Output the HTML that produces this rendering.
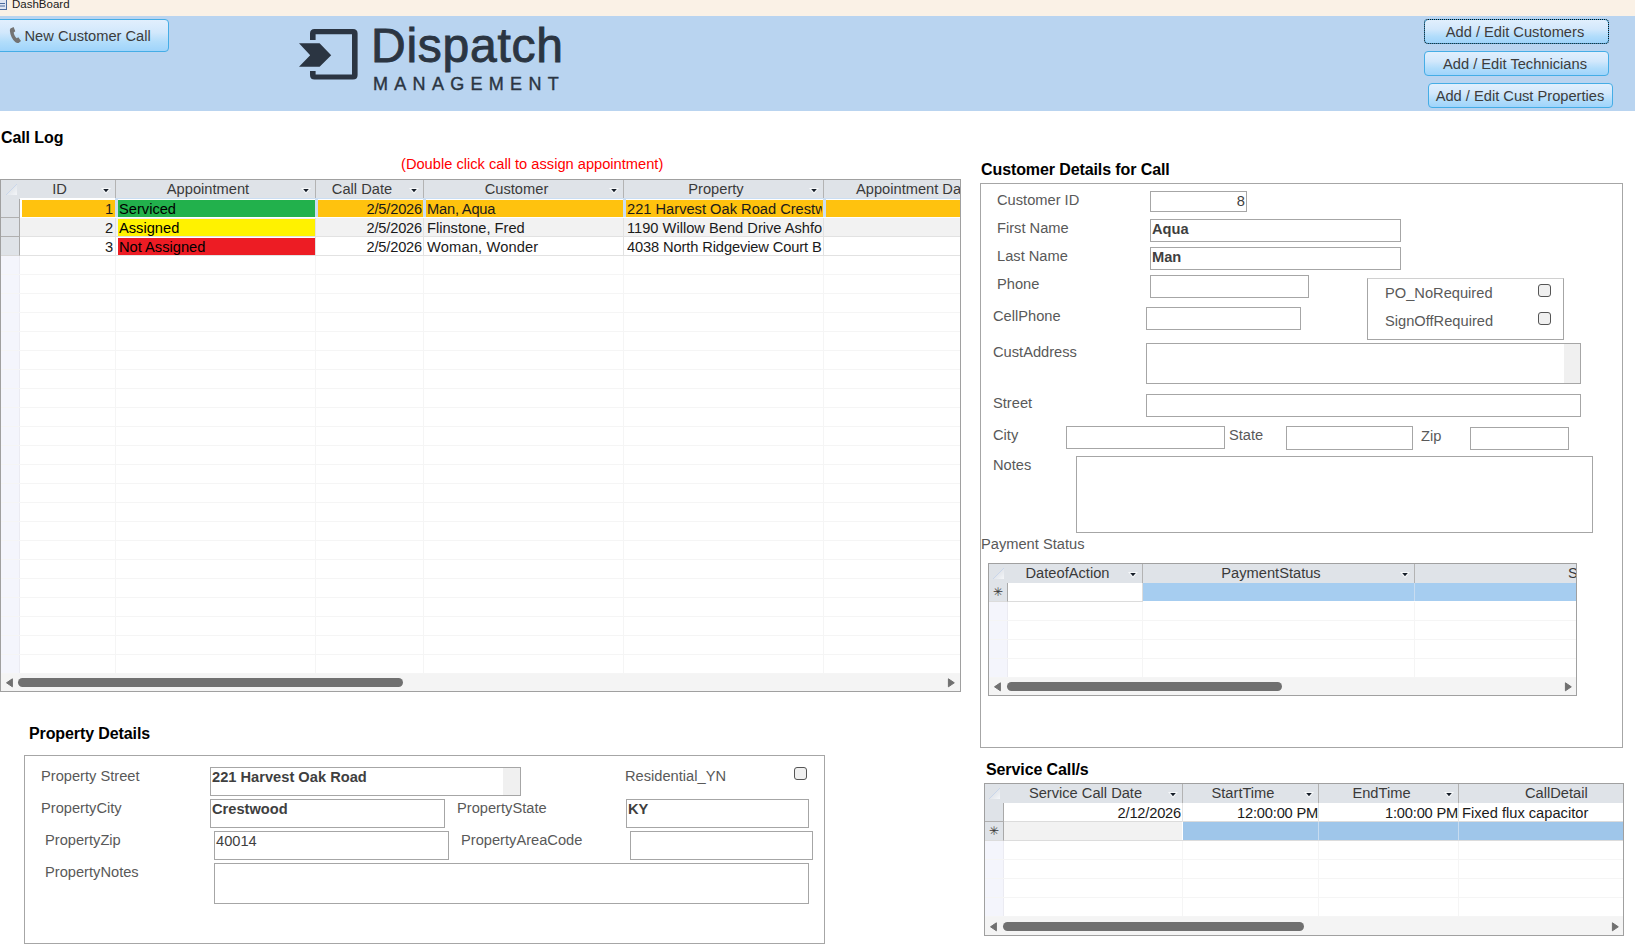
<!DOCTYPE html>
<html><head><meta charset="utf-8"><title>DashBoard</title>
<style>
*{box-sizing:border-box;margin:0;padding:0}
html,body{width:1635px;height:945px;overflow:hidden;background:#fff}
body{position:relative;font-family:"Liberation Sans",sans-serif;font-size:14.67px;color:#595959}
div,svg{position:absolute}
#title{left:0;top:0;width:1635px;height:16px;background:#faf1e6}
#title span{position:absolute;left:12px;top:-2px;font-size:11.5px;color:#1a1a1a;white-space:nowrap;letter-spacing:0}
#band{left:0;top:16px;width:1635px;height:95px;background:#b9d4f0}
.btn{border:1px solid #45ade6;border-radius:4px;background:linear-gradient(#e1effd 0%,#d2e8fc 40%,#b2ddfb 70%,#9fd4fb 100%);color:#3c3c3c;text-align:center;white-space:nowrap}
#fb::after{content:"";position:absolute;left:-1px;top:-1px;right:-1px;bottom:-1px;border:1px dotted #111;border-radius:4px}
.lbl{white-space:nowrap;color:#595959;line-height:17px;height:17px}
.h{white-space:nowrap;color:#000;font-weight:bold;font-size:16px;line-height:18px;letter-spacing:-0.1px}
.inp{border:1px solid #a6a6a6;background:#fff;color:#3f3f3f;font-weight:bold;white-space:nowrap;overflow:hidden;padding:1px 1px;line-height:17px}
.box{border:1px solid #a6a6a6}
.cb{width:13px;height:13px;border:1px solid #555;border-radius:3px;background:#f0f0f0}
.grid{border:1px solid #a0a0a0;background:#fff;overflow:hidden}
.gh{background:#dfe3e8;color:#3a3a3a;text-align:center;line-height:18px;height:19px;top:0;white-space:nowrap;overflow:hidden}
.cell{white-space:nowrap;overflow:hidden;line-height:18px;height:18px;color:#1a1a1a}
.arr{width:10px;height:6px}
.sb{background:#f4f4f4}
.thumb{background:#707070;border-radius:5px;height:9px}
.tl{width:0;height:0;border-top:4.5px solid transparent;border-bottom:4.5px solid transparent;border-right:7px solid #707070}
.tr{width:0;height:0;border-top:4.5px solid transparent;border-bottom:4.5px solid transparent;border-left:7px solid #707070}
.vl{width:1px}
.hl{height:1px}
</style></head><body>
<div id="title"><span>DashBoard</span></div>
<div id="band"></div>
<svg style="left:0;top:0;width:12px;height:16px" viewBox="0 0 12 16"><rect x="-3" y="-1" width="9.5" height="10.5" fill="#dfe6f3" stroke="#4a6a9c" stroke-width="1"/><path d="M0 3.5h5M0 6h5" stroke="#4a6a9c" stroke-width="1"/></svg>
<div class="btn" style="left:-4px;top:19px;width:173px;height:33px;line-height:33.5px;text-align:left;padding-left:27.5px">New Customer Call</div>
<svg style="left:9px;top:26px;width:13px;height:18px" viewBox="0 0 13 18"><path d="M1.4 2.4 L4.6 0.9 L6.3 5.3 L4.7 6.5 C4.9 8.6 6 10.7 7.7 12.2 L9.3 11.3 L12 15 L9.6 16.9 C8.6 17.3 7.5 17.1 6.5 16.3 C3.3 13.7 1.3 9.7 0.9 5.1 C0.8 4 0.9 3.1 1.4 2.4 Z" fill="#737373"/></svg>
<svg style="left:296px;top:26px;width:66px;height:58px" viewBox="296 26 66 58">
<path d="M310 40 V33.5 Q310 29 314.5 29 H353 Q357.6 29 357.6 33.5 V75 Q357.6 79.6 353 79.6 H314.5 Q310 79.6 310 75 V71.1 H315.6 V74.4 H352 V34.2 H315.6 V40 Z" fill="#2b3542"/>
<path d="M299 43.2 H319.6 L331.2 55.2 L319.6 66.8 H299 L310.2 55.2 Z" fill="#2b3542"/></svg>
<div id="logo1" style="left:371px;top:19px;font-size:48px;line-height:54px;color:#2b3542;letter-spacing:0.75px;-webkit-text-stroke:0.9px #2b3542;white-space:nowrap">Dispatch</div>
<div id="logo2" style="left:373px;top:74.3px;font-size:18px;line-height:20px;color:#2b3542;letter-spacing:6.3px;-webkit-text-stroke:0.4px #2b3542;white-space:nowrap">MANAGEMENT</div>
<div class="btn" id="fb" style="left:1424px;top:19px;width:185px;height:25px;line-height:25px;padding-right:3px">Add / Edit Customers</div>
<div class="btn" style="left:1424px;top:51px;width:185px;height:25px;line-height:25px;padding-right:3px">Add / Edit Technicians</div>
<div class="btn" style="left:1428px;top:83px;width:185px;height:25px;line-height:25px;padding-right:1px">Add / Edit Cust Properties</div>
<div class="h" style="left:1px;top:129px">Call Log</div>
<div class="lbl" style="left:401px;top:156px;color:#ff0000">(Double click call to assign appointment)</div>
<div class="grid" style="left:0;top:179px;width:961px;height:513px">
<div class="gh" style="left:0;width:961px"></div>
<svg style="left:4px;top:3px;width:13px;height:13px" viewBox="0 0 13 13"><defs><linearGradient id="tg1" x1="0" y1="0" x2="1" y2="1"><stop offset="0.4" stop-color="#dfe3e8"/><stop offset="1" stop-color="#f4f6f9"/></linearGradient></defs><path d="M12 1V12H1Z" fill="url(#tg1)"/><path d="M1 12L12 1" stroke="#c9d6ea" stroke-width="1"/></svg>
<div class="gh" style="left:19px;width:95px;padding-right:16px">ID</div>
<svg class="arr" style="left:100px;top:8px" viewBox="0 0 10 6"><path d="M0 0H10L5 6Z" fill="#f6f8fa"/><path d="M2.2 1H7.8L5 4.2Z" fill="#161e29"/></svg>
<div class="gh" style="left:114px;width:200px;padding-right:14px">Appointment</div>
<svg class="arr" style="left:300px;top:8px" viewBox="0 0 10 6"><path d="M0 0H10L5 6Z" fill="#f6f8fa"/><path d="M2.2 1H7.8L5 4.2Z" fill="#161e29"/></svg>
<div class="gh" style="left:314px;width:108px;padding-right:14px">Call Date</div>
<svg class="arr" style="left:408px;top:8px" viewBox="0 0 10 6"><path d="M0 0H10L5 6Z" fill="#f6f8fa"/><path d="M2.2 1H7.8L5 4.2Z" fill="#161e29"/></svg>
<div class="gh" style="left:422px;width:200px;padding-right:13px">Customer</div>
<svg class="arr" style="left:608px;top:8px" viewBox="0 0 10 6"><path d="M0 0H10L5 6Z" fill="#f6f8fa"/><path d="M2.2 1H7.8L5 4.2Z" fill="#161e29"/></svg>
<div class="gh" style="left:622px;width:200px;padding-right:14px">Property</div>
<svg class="arr" style="left:808px;top:8px" viewBox="0 0 10 6"><path d="M0 0H10L5 6Z" fill="#f6f8fa"/><path d="M2.2 1H7.8L5 4.2Z" fill="#161e29"/></svg>
<div class="gh" style="left:823px;width:138px;text-align:left;padding-left:32px">Appointment Da</div>
<div class="vl" style="left:114px;top:0px;height:19px;background:#b3b3b3"></div>
<div class="vl" style="left:314px;top:0px;height:19px;background:#b3b3b3"></div>
<div class="vl" style="left:422px;top:0px;height:19px;background:#b3b3b3"></div>
<div class="vl" style="left:622px;top:0px;height:19px;background:#b3b3b3"></div>
<div class="vl" style="left:822px;top:0px;height:19px;background:#b3b3b3"></div>
<div style="left:0;top:19px;width:19px;height:475px;background:#f4f5fc;border-right:1px solid #ebebf2"></div>
<div style="left:0;top:19px;width:19px;height:19px;background:#dfe3e8;border-right:1px solid #a9a9a9;border-bottom:1px solid #b0b0b0"></div>
<div style="left:19px;top:18px;width:941px;height:20px;background:#fff"></div>
<div style="left:114px;top:18px;width:3px;height:19px;background:#cbdef3"></div>
<div style="left:314px;top:18px;width:3px;height:19px;background:#cbdef3"></div>
<div style="left:422px;top:18px;width:3px;height:19px;background:#cbdef3"></div>
<div style="left:622px;top:18px;width:3px;height:19px;background:#cbdef3"></div>
<div style="left:822px;top:18px;width:3px;height:19px;background:#cbdef3"></div>
<div style="left:114px;top:18px;width:846px;height:1px;background:#cbdef3"></div>
<div style="left:21px;top:20px;width:93px;height:17px;background:#ffc20e"></div>
<div style="left:317px;top:20px;width:105px;height:17px;background:#ffc20e"></div>
<div style="left:425px;top:20px;width:197px;height:17px;background:#ffc20e"></div>
<div style="left:625px;top:20px;width:197px;height:17px;background:#ffc20e"></div>
<div style="left:825px;top:20px;width:135px;height:17px;background:#ffc20e"></div>
<div class="cell" style="left:21px;top:20px;width:91px;text-align:right;letter-spacing:-0.2px">1</div>
<div class="cell" style="left:117px;top:20px;width:197px;height:17px;background:#22b14c;padding-left:1px;line-height:19px;color:#000">Serviced</div>
<div class="cell" style="left:317px;top:20px;width:104px;text-align:right;letter-spacing:-0.2px">2/5/2026</div>
<div class="cell" style="left:426px;top:20px;width:195px;letter-spacing:-0.2px">Man, Aqua</div>
<div class="cell" style="left:626px;top:20px;width:195px;letter-spacing:0px">221 Harvest Oak Road Crestwood</div>
<div style="left:0;top:38px;width:19px;height:19px;background:#dfe3e8;border-right:1px solid #a9a9a9;border-bottom:1px solid #b0b0b0"></div>
<div style="left:19px;top:38px;width:941px;height:19px;background:#f2f2f2;border-bottom:1px solid #e2e2e2"></div>
<div class="vl" style="left:114px;top:38px;height:19px;background:#e2e2e2"></div>
<div class="vl" style="left:314px;top:38px;height:19px;background:#e2e2e2"></div>
<div class="vl" style="left:422px;top:38px;height:19px;background:#e2e2e2"></div>
<div class="vl" style="left:622px;top:38px;height:19px;background:#e2e2e2"></div>
<div class="vl" style="left:822px;top:38px;height:19px;background:#e2e2e2"></div>
<div class="cell" style="left:21px;top:39px;width:91px;text-align:right;letter-spacing:-0.2px">2</div>
<div class="cell" style="left:117px;top:39px;width:197px;height:17px;background:#fff200;padding-left:1px;line-height:19px;color:#000">Assigned</div>
<div class="cell" style="left:317px;top:39px;width:104px;text-align:right;letter-spacing:-0.2px">2/5/2026</div>
<div class="cell" style="left:426px;top:39px;width:195px;letter-spacing:0px">Flinstone, Fred</div>
<div class="cell" style="left:626px;top:39px;width:195px;letter-spacing:0px">1190 Willow Bend Drive Ashford</div>
<div style="left:0;top:57px;width:19px;height:19px;background:#dfe3e8;border-right:1px solid #a9a9a9;border-bottom:1px solid #d8d8d8"></div>
<div style="left:19px;top:57px;width:941px;height:19px;background:#ffffff;border-bottom:1px solid #e2e2e2"></div>
<div class="vl" style="left:114px;top:57px;height:19px;background:#e2e2e2"></div>
<div class="vl" style="left:314px;top:57px;height:19px;background:#e2e2e2"></div>
<div class="vl" style="left:422px;top:57px;height:19px;background:#e2e2e2"></div>
<div class="vl" style="left:622px;top:57px;height:19px;background:#e2e2e2"></div>
<div class="vl" style="left:822px;top:57px;height:19px;background:#e2e2e2"></div>
<div class="cell" style="left:21px;top:58px;width:91px;text-align:right;letter-spacing:-0.2px">3</div>
<div class="cell" style="left:117px;top:58px;width:197px;height:17px;background:#ed1c24;padding-left:1px;line-height:19px;color:#000">Not Assigned</div>
<div class="cell" style="left:317px;top:58px;width:104px;text-align:right;letter-spacing:-0.2px">2/5/2026</div>
<div class="cell" style="left:426px;top:58px;width:195px;letter-spacing:0.15px">Woman, Wonder</div>
<div class="cell" style="left:626px;top:58px;width:195px;letter-spacing:-0.12px">4038 North Ridgeview Court B</div>
<div class="hl" style="left:0px;top:94px;width:961px;background:#f5f5f5"></div>
<div class="hl" style="left:0px;top:113px;width:961px;background:#f5f5f5"></div>
<div class="hl" style="left:0px;top:132px;width:961px;background:#f5f5f5"></div>
<div class="hl" style="left:0px;top:151px;width:961px;background:#f5f5f5"></div>
<div class="hl" style="left:0px;top:170px;width:961px;background:#f5f5f5"></div>
<div class="hl" style="left:0px;top:189px;width:961px;background:#f5f5f5"></div>
<div class="hl" style="left:0px;top:208px;width:961px;background:#f5f5f5"></div>
<div class="hl" style="left:0px;top:227px;width:961px;background:#f5f5f5"></div>
<div class="hl" style="left:0px;top:246px;width:961px;background:#f5f5f5"></div>
<div class="hl" style="left:0px;top:265px;width:961px;background:#f5f5f5"></div>
<div class="hl" style="left:0px;top:284px;width:961px;background:#f5f5f5"></div>
<div class="hl" style="left:0px;top:303px;width:961px;background:#f5f5f5"></div>
<div class="hl" style="left:0px;top:322px;width:961px;background:#f5f5f5"></div>
<div class="hl" style="left:0px;top:341px;width:961px;background:#f5f5f5"></div>
<div class="hl" style="left:0px;top:360px;width:961px;background:#f5f5f5"></div>
<div class="hl" style="left:0px;top:379px;width:961px;background:#f5f5f5"></div>
<div class="hl" style="left:0px;top:398px;width:961px;background:#f5f5f5"></div>
<div class="hl" style="left:0px;top:417px;width:961px;background:#f5f5f5"></div>
<div class="hl" style="left:0px;top:436px;width:961px;background:#f5f5f5"></div>
<div class="hl" style="left:0px;top:455px;width:961px;background:#f5f5f5"></div>
<div class="hl" style="left:0px;top:474px;width:961px;background:#f5f5f5"></div>
<div class="hl" style="left:0px;top:493px;width:961px;background:#f5f5f5"></div>
<div class="vl" style="left:114px;top:76px;height:418px;background:#f5f5f5"></div>
<div class="vl" style="left:314px;top:76px;height:418px;background:#f5f5f5"></div>
<div class="vl" style="left:422px;top:76px;height:418px;background:#f5f5f5"></div>
<div class="vl" style="left:622px;top:76px;height:418px;background:#f5f5f5"></div>
<div class="vl" style="left:822px;top:76px;height:418px;background:#f5f5f5"></div>
<div class="sb" style="left:0;top:494px;width:961px;height:17px"></div>
<svg style="left:5px;top:498px;width:8px;height:10px" viewBox="0 0 8 10"><path d="M6.4 0.8V8.800L0.5 4.8Z" fill="#707070" stroke="#707070" stroke-width="1" stroke-linejoin="round"/></svg>
<div class="thumb" style="left:17px;top:498px;width:385px"></div>
<svg style="left:946px;top:498px;width:8px;height:10px" viewBox="0 0 8 10"><path d="M1.4 0.8V8.800L7.3 4.8Z" fill="#707070" stroke="#707070" stroke-width="1" stroke-linejoin="round"/></svg>
</div>
<div class="h" style="left:981px;top:161px">Customer Details for Call</div>
<div class="box" style="left:980px;top:183px;width:643px;height:565px"></div>
<div class="lbl" style="left:997px;top:191.5px">Customer ID</div>
<div class="inp" style="left:1150px;top:191px;width:97px;height:21px;text-align:right;font-weight:normal;padding-top:1px">8</div>
<div class="lbl" style="left:997px;top:219.5px">First Name</div>
<div class="inp" style="left:1150px;top:219px;width:251px;height:23px;">Aqua</div>
<div class="lbl" style="left:997px;top:247.5px">Last Name</div>
<div class="inp" style="left:1150px;top:247px;width:251px;height:23px;">Man</div>
<div class="lbl" style="left:997px;top:275.5px">Phone</div>
<div class="inp" style="left:1150px;top:275px;width:159px;height:23px;"></div>
<div class="lbl" style="left:993px;top:307.5px">CellPhone</div>
<div class="inp" style="left:1146px;top:307px;width:155px;height:23px;"></div>
<div class="box" style="left:1367px;top:278px;width:197px;height:62px;border-top-color:#d0d0d0"></div>
<div class="lbl" style="left:1385px;top:284.5px">PO_NoRequired</div>
<div class="cb" style="left:1538px;top:284px"></div>
<div class="lbl" style="left:1385px;top:312.5px">SignOffRequired</div>
<div class="cb" style="left:1538px;top:312px"></div>
<div class="lbl" style="left:993px;top:343.5px">CustAddress</div>
<div class="inp" style="left:1146px;top:343px;width:435px;height:41px;"></div>
<div style="left:1564px;top:344px;width:16px;height:39px;background:#f0f0f0"></div>
<div class="lbl" style="left:993px;top:394.5px">Street</div>
<div class="inp" style="left:1146px;top:394px;width:435px;height:23px;"></div>
<div class="lbl" style="left:993px;top:426.5px">City</div>
<div class="inp" style="left:1066px;top:426px;width:159px;height:23px;"></div>
<div class="lbl" style="left:1229px;top:426.5px">State</div>
<div class="inp" style="left:1286px;top:426px;width:127px;height:24px;"></div>
<div class="lbl" style="left:1421px;top:427.5px">Zip</div>
<div class="inp" style="left:1470px;top:427px;width:99px;height:23px;"></div>
<div class="lbl" style="left:993px;top:456.5px">Notes</div>
<div class="inp" style="left:1076px;top:456px;width:517px;height:77px;"></div>
<div class="lbl" style="left:981px;top:535.5px">Payment Status</div>
<div class="grid" style="left:988px;top:563px;width:589px;height:133px">
<div class="gh" style="left:0;width:589px"></div>
<svg style="left:3px;top:3px;width:13px;height:13px" viewBox="0 0 13 13"><defs><linearGradient id="tg2" x1="0" y1="0" x2="1" y2="1"><stop offset="0.4" stop-color="#dfe3e8"/><stop offset="1" stop-color="#f4f6f9"/></linearGradient></defs><path d="M12 1V12H1Z" fill="url(#tg2)"/><path d="M1 12L12 1" stroke="#c9d6ea" stroke-width="1"/></svg>
<div style="left:0;top:19px;width:19px;height:95px;background:#f4f5fc;border-right:1px solid #ebebf2"></div>
<div class="gh" style="left:18px;width:135px;padding-right:14px">DateofAction</div>
<svg class="arr" style="left:139px;top:8px" viewBox="0 0 10 6"><path d="M0 0H10L5 6Z" fill="#f6f8fa"/><path d="M2.2 1H7.8L5 4.2Z" fill="#161e29"/></svg>
<div class="gh" style="left:153px;width:272px;padding-right:14px">PaymentStatus</div>
<svg class="arr" style="left:411px;top:8px" viewBox="0 0 10 6"><path d="M0 0H10L5 6Z" fill="#f6f8fa"/><path d="M2.2 1H7.8L5 4.2Z" fill="#161e29"/></svg>
<div class="gh" style="left:426px;width:286px;text-align:left;padding-left:153px">S</div>
<div class="vl" style="left:153px;top:0px;height:19px;background:#b3b3b3"></div>
<div class="vl" style="left:425px;top:0px;height:19px;background:#b3b3b3"></div>
<div style="left:0;top:19px;width:19px;height:19px;background:#dfe3e8;border-right:1px solid #a9a9a9;border-bottom:1px solid #dcdcdc;text-align:center;line-height:19px;font-size:12px;color:#3a3a3a;letter-spacing:0">&#10035;</div>
<div style="left:154px;top:19px;width:440px;height:18px;background:#a6cdf0"></div>
<div class="vl" style="left:425px;top:19px;height:18px;background:#c8dcf0"></div>
<div class="hl" style="left:19px;top:37px;width:135px;background:#dcdcdc"></div>
<div class="vl" style="left:153px;top:19px;height:19px;background:#dcdcdc"></div>
<div class="hl" style="left:0px;top:56px;width:589px;background:#f5f5f5"></div>
<div class="hl" style="left:0px;top:75px;width:589px;background:#f5f5f5"></div>
<div class="hl" style="left:0px;top:94px;width:589px;background:#f5f5f5"></div>
<div class="hl" style="left:0px;top:113px;width:589px;background:#f5f5f5"></div>
<div class="hl" style="left:0px;top:132px;width:589px;background:#f5f5f5"></div>
<div class="vl" style="left:153px;top:38px;height:76px;background:#f5f5f5"></div>
<div class="vl" style="left:425px;top:38px;height:76px;background:#f5f5f5"></div>
<div class="sb" style="left:0;top:114px;width:589px;height:18px"></div>
<svg style="left:5px;top:118px;width:8px;height:10px" viewBox="0 0 8 10"><path d="M6.4 0.8V8.800L0.5 4.8Z" fill="#707070" stroke="#707070" stroke-width="1" stroke-linejoin="round"/></svg>
<div class="thumb" style="left:18px;top:118px;width:275px"></div>
<svg style="left:575px;top:118px;width:8px;height:10px" viewBox="0 0 8 10"><path d="M1.4 0.8V8.800L7.3 4.8Z" fill="#707070" stroke="#707070" stroke-width="1" stroke-linejoin="round"/></svg>
</div>
<div class="h" style="left:29px;top:725px">Property Details</div>
<div class="box" style="left:24px;top:755px;width:801px;height:189px"></div>
<div class="lbl" style="left:41px;top:767.5px">Property Street</div>
<div class="inp" style="left:210px;top:767px;width:311px;height:29px;">221 Harvest Oak Road</div>
<div style="left:503px;top:768px;width:17px;height:27px;background:#f0f0f0"></div>
<div class="lbl" style="left:625px;top:767.5px">Residential_YN</div>
<div class="cb" style="left:794px;top:767px"></div>
<div class="lbl" style="left:41px;top:799.5px">PropertyCity</div>
<div class="inp" style="left:210px;top:799px;width:235px;height:29px;">Crestwood</div>
<div class="lbl" style="left:457px;top:799.5px">PropertyState</div>
<div class="inp" style="left:626px;top:799px;width:183px;height:29px;">KY</div>
<div class="lbl" style="left:45px;top:831.5px">PropertyZip</div>
<div class="inp" style="left:214px;top:831px;width:235px;height:29px;font-weight:normal;padding-top:1px">40014</div>
<div class="lbl" style="left:461px;top:831.5px">PropertyAreaCode</div>
<div class="inp" style="left:630px;top:831px;width:183px;height:29px;"></div>
<div class="lbl" style="left:45px;top:863.5px">PropertyNotes</div>
<div class="inp" style="left:214px;top:863px;width:595px;height:41px;"></div>
<div class="h" style="left:986px;top:761px">Service Call/s</div>
<div class="grid" style="left:984px;top:783px;width:640px;height:153px">
<div class="gh" style="left:0;width:640px"></div>
<svg style="left:3px;top:3px;width:13px;height:13px" viewBox="0 0 13 13"><defs><linearGradient id="tg3" x1="0" y1="0" x2="1" y2="1"><stop offset="0.4" stop-color="#dfe3e8"/><stop offset="1" stop-color="#f4f6f9"/></linearGradient></defs><path d="M12 1V12H1Z" fill="url(#tg3)"/><path d="M1 12L12 1" stroke="#c9d6ea" stroke-width="1"/></svg>
<div style="left:0;top:19px;width:19px;height:114px;background:#f4f5fc;border-right:1px solid #ebebf2"></div>
<div class="gh" style="left:18px;width:179px;padding-right:14px">Service Call Date</div>
<svg class="arr" style="left:183px;top:8px" viewBox="0 0 10 6"><path d="M0 0H10L5 6Z" fill="#f6f8fa"/><path d="M2.2 1H7.8L5 4.2Z" fill="#161e29"/></svg>
<div class="gh" style="left:197px;width:136px;padding-right:14px">StartTime</div>
<svg class="arr" style="left:319px;top:8px" viewBox="0 0 10 6"><path d="M0 0H10L5 6Z" fill="#f6f8fa"/><path d="M2.2 1H7.8L5 4.2Z" fill="#161e29"/></svg>
<div class="gh" style="left:333px;width:140px;padding-right:13px">EndTime</div>
<svg class="arr" style="left:459px;top:8px" viewBox="0 0 10 6"><path d="M0 0H10L5 6Z" fill="#f6f8fa"/><path d="M2.2 1H7.8L5 4.2Z" fill="#161e29"/></svg>
<div class="gh" style="left:474px;width:242px;text-align:left;padding-left:66px">CallDetail</div>
<div class="vl" style="left:197px;top:0px;height:19px;background:#b3b3b3"></div>
<div class="vl" style="left:333px;top:0px;height:19px;background:#b3b3b3"></div>
<div class="vl" style="left:473px;top:0px;height:19px;background:#b3b3b3"></div>
<div style="left:0;top:19px;width:19px;height:19px;background:#dfe3e8;border-right:1px solid #a9a9a9;border-bottom:1px solid #b0b0b0"></div>
<div class="cell" style="left:19px;top:20px;width:177px;text-align:right;letter-spacing:-0.2px">2/12/2026</div>
<div class="cell" style="left:198px;top:20px;width:135px;text-align:right;letter-spacing:-0.2px">12:00:00 PM</div>
<div class="cell" style="left:334px;top:20px;width:139px;text-align:right;letter-spacing:-0.2px">1:00:00 PM</div>
<div class="cell" style="left:477px;top:20px;width:170px">Fixed flux capacitor</div>
<div class="hl" style="left:19px;top:37px;width:640px;background:#dcdcdc"></div>
<div style="left:0;top:38px;width:19px;height:19px;background:#dfe3e8;border-right:1px solid #a9a9a9;border-bottom:1px solid #dcdcdc;text-align:center;line-height:19px;font-size:12px;color:#3a3a3a;letter-spacing:0">&#10035;</div>
<div style="left:19px;top:38px;width:178px;height:18px;background:#f2f2f2"></div>
<div style="left:198px;top:38px;width:460px;height:18px;background:#9fc6ea"></div>
<div class="vl" style="left:333px;top:38px;height:18px;background:#c8dcf0"></div>
<div class="vl" style="left:473px;top:38px;height:18px;background:#c8dcf0"></div>
<div class="vl" style="left:197px;top:19px;height:19px;background:#e4e4e4"></div>
<div class="vl" style="left:333px;top:19px;height:19px;background:#e4e4e4"></div>
<div class="vl" style="left:473px;top:19px;height:19px;background:#e4e4e4"></div>
<div class="hl" style="left:19px;top:56px;width:640px;background:#dcdcdc"></div>
<div class="hl" style="left:0px;top:75px;width:640px;background:#f5f5f5"></div>
<div class="hl" style="left:0px;top:94px;width:640px;background:#f5f5f5"></div>
<div class="hl" style="left:0px;top:113px;width:640px;background:#f5f5f5"></div>
<div class="hl" style="left:0px;top:132px;width:640px;background:#f5f5f5"></div>
<div class="vl" style="left:197px;top:57px;height:76px;background:#f5f5f5"></div>
<div class="vl" style="left:333px;top:57px;height:76px;background:#f5f5f5"></div>
<div class="vl" style="left:473px;top:57px;height:76px;background:#f5f5f5"></div>
<div class="sb" style="left:0;top:133px;width:640px;height:18px"></div>
<svg style="left:5px;top:138px;width:8px;height:10px" viewBox="0 0 8 10"><path d="M6.4 0.8V8.800L0.5 4.8Z" fill="#707070" stroke="#707070" stroke-width="1" stroke-linejoin="round"/></svg>
<div class="thumb" style="left:18px;top:138px;width:301px"></div>
<svg style="left:626px;top:138px;width:8px;height:10px" viewBox="0 0 8 10"><path d="M1.4 0.8V8.800L7.3 4.8Z" fill="#707070" stroke="#707070" stroke-width="1" stroke-linejoin="round"/></svg>
</div>
</body></html>
